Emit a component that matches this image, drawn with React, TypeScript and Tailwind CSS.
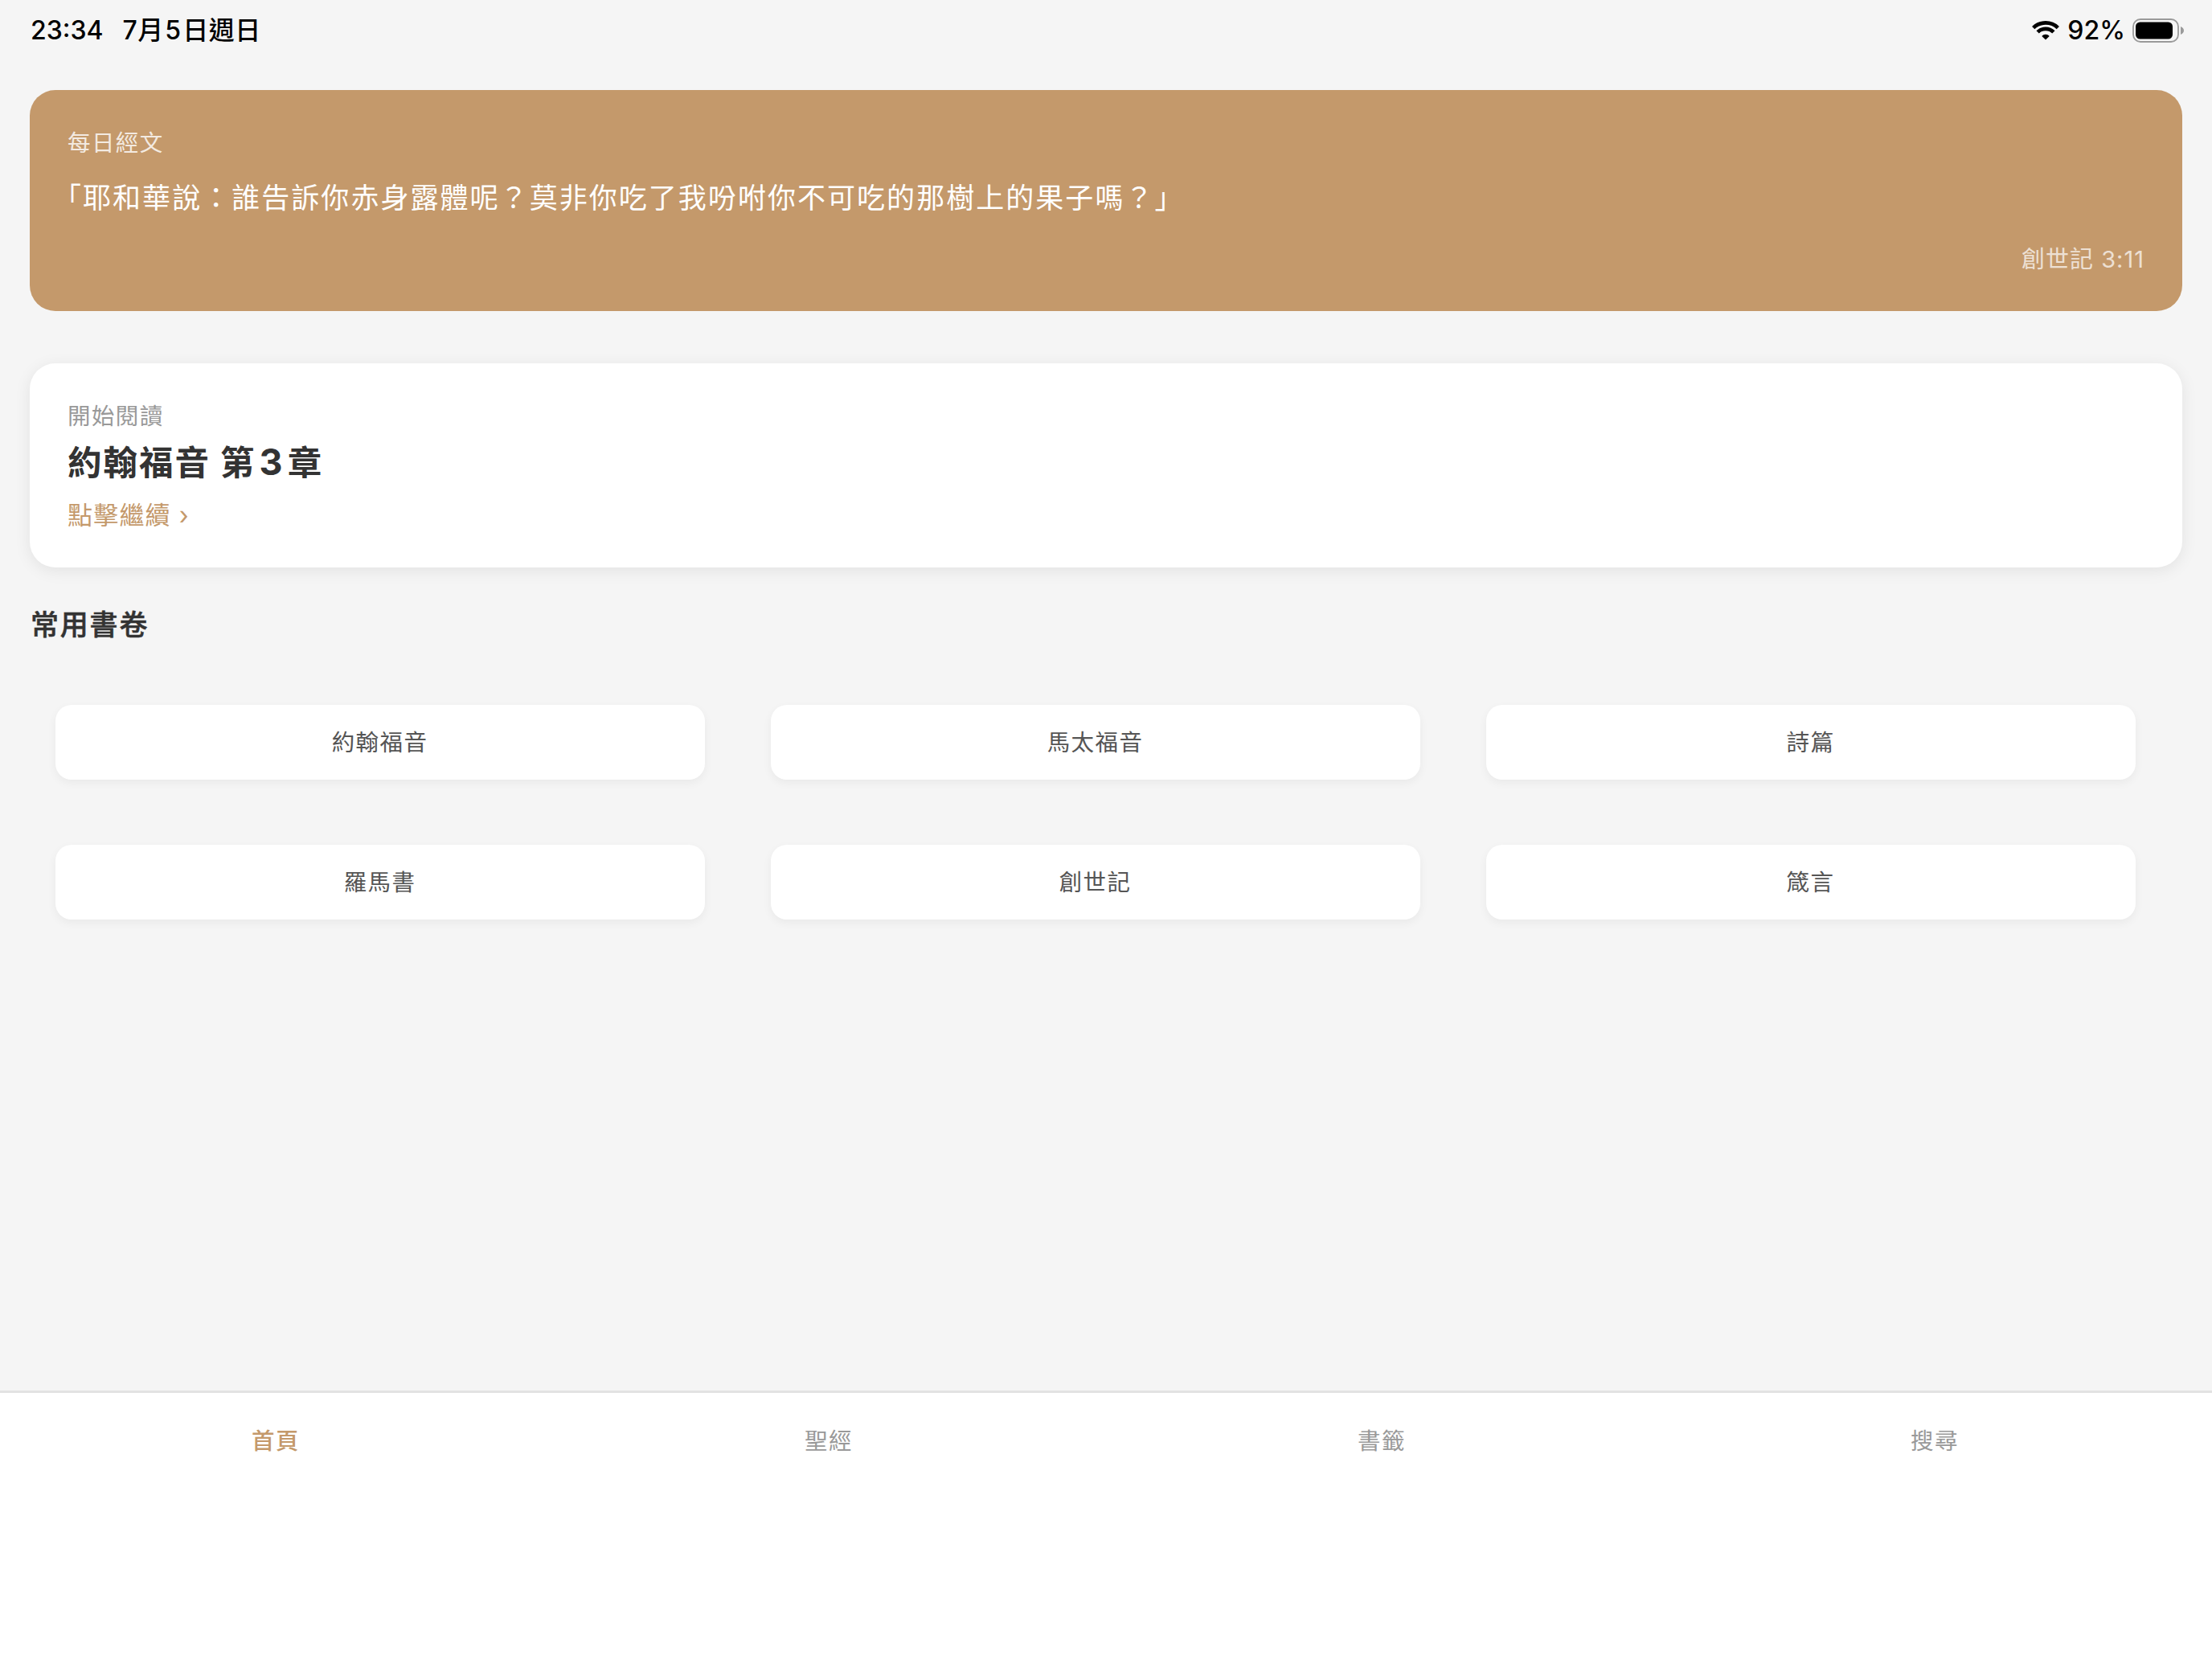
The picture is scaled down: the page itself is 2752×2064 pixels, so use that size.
import React from 'react';

const books = ['約翰福音', '馬太福音', '詩篇', '羅馬書', '創世記', '箴言'];

const tabs = ['首頁', '聖經', '書籤', '搜尋'];

const WifiIcon = () => (
  <svg className="w-[34px] h-[24px]" viewBox="0 0 34 24" fill="none" stroke="#000">
    <path d="M1.700 8.600C10 .4 24 .4 32.300 8.600" strokeWidth="4.700" />
    <path d="M7.100 13.900C12.500 8.500 21.500 8.500 26.900 13.900" strokeWidth="4.700" />
    <path d="M17 23.500L12.300 18.900C14.800 15.900 19.200 15.900 21.700 18.900Z" fill="#000" stroke="none" />
  </svg>
);

const BatteryIcon = () => (
  <svg className="w-[65px] h-[30px]" viewBox="0 0 65 30">
    <rect x="1" y="1" width="56" height="28" rx="9" fill="none" stroke="#9a9a9a" strokeWidth="1.800" />
    <rect x="4" y="4.500" width="46" height="21" rx="5.500" fill="#000" />
    <path d="M60 10C62.500 11 64 12.800 64 15S62.500 19 60 20Z" fill="#9a9a9a" />
  </svg>
);

export default function App() {
  return (
    <div className="w-[2752px] h-[2064px] flex flex-col bg-[#f5f5f5] font-[Inter,'Noto_Sans_CJK_TC',sans-serif] overflow-hidden">
      {/* Status bar */}
      <div className="h-[112px] shrink-0 pl-[38px] pr-[34px] flex items-start justify-between text-black font-medium">
        <div className="flex pt-[18px] text-[32px] leading-[40px]">
          <span>23:34</span>
          <span className="ml-[24px] tracking-[0.5px]">
            7月<span className="mx-[1.5px]">5</span>日週日
          </span>
        </div>
        <div className="flex items-center pt-[17px] h-[58px] text-[32px] leading-[40px]">
          <WifiIcon />
          <span className="ml-[10px] mr-[9px]">92%</span>
          <BatteryIcon />
        </div>
      </div>

      <main className="flex-1 px-[37px]">
        {/* Daily verse */}
        <section className="h-[275px] rounded-[32px] bg-[#c4996b] px-[47px] pt-[44px] text-white">
          <p className="text-[28.5px] leading-[44px] tracking-[1.4px] opacity-80">每日經文</p>
          <p className="mt-[19px] -ml-[18px] text-[35px] leading-[54px] tracking-[2.04px]">
            「耶和華說：誰告訴你赤身露體呢？莫非你吃了我吩咐你不可吃的那樹上的果子嗎？」
          </p>
          <p className="mt-[28px] text-right text-[29px] leading-[44px] tracking-[1px] opacity-70">創世記 3:11</p>
        </section>

        {/* Continue reading */}
        <section className="mt-[65px] h-[254px] rounded-[32px] bg-white px-[47px] pt-[44px] shadow-[0_4px_20px_rgba(0,0,0,0.08)]">
          <p className="text-[28.5px] leading-[44px] tracking-[1.4px] text-[#999]">開始閱讀</p>
          <h2 className="mt-[6px] text-[42.5px] leading-[60px] tracking-[2px] font-bold text-[#333]">
            約翰福音 第<span className="mx-[4px] text-[45px] leading-none">3</span>章
          </h2>
          <p className="mt-[11px] text-[31px] leading-[48px] tracking-[1.2px] text-[#c4996b]">點擊繼續 ›</p>
        </section>

        {/* Favourite books */}
        <h3 className="mt-[44px] pl-px text-[35px] leading-[54px] tracking-[1.8px] font-medium text-[#333] [-webkit-text-stroke:0.5px_#333]">
          常用書卷
        </h3>
        <div className="mt-[73px] pl-[31.5px] grid grid-cols-[repeat(3,808px)] gap-x-[82px] gap-y-[81px]">
          {books.map((book) => (
            <button
              key={book}
              className="h-[93px] rounded-[20px] bg-white pt-[2px] text-[28.5px] tracking-[1.4px] text-[#555] shadow-[0_4px_12px_rgba(0,0,0,0.05)]"
            >
              {book}
            </button>
          ))}
        </div>
      </main>

      {/* Tab bar */}
      <nav className="h-[334px] shrink-0 grid grid-cols-4 bg-white border-t-[3px] border-[#e2e2e2] pt-[38px] text-center text-[28.5px] leading-[44px] tracking-[1.4px]">
        {tabs.map((tab, i) => (
          <span key={tab} className={i === 0 ? 'pr-[2px] text-[#c4996b] font-medium' : 'pr-[2px] text-[#999]'}>
            {tab}
          </span>
        ))}
      </nav>
    </div>
  );
}
